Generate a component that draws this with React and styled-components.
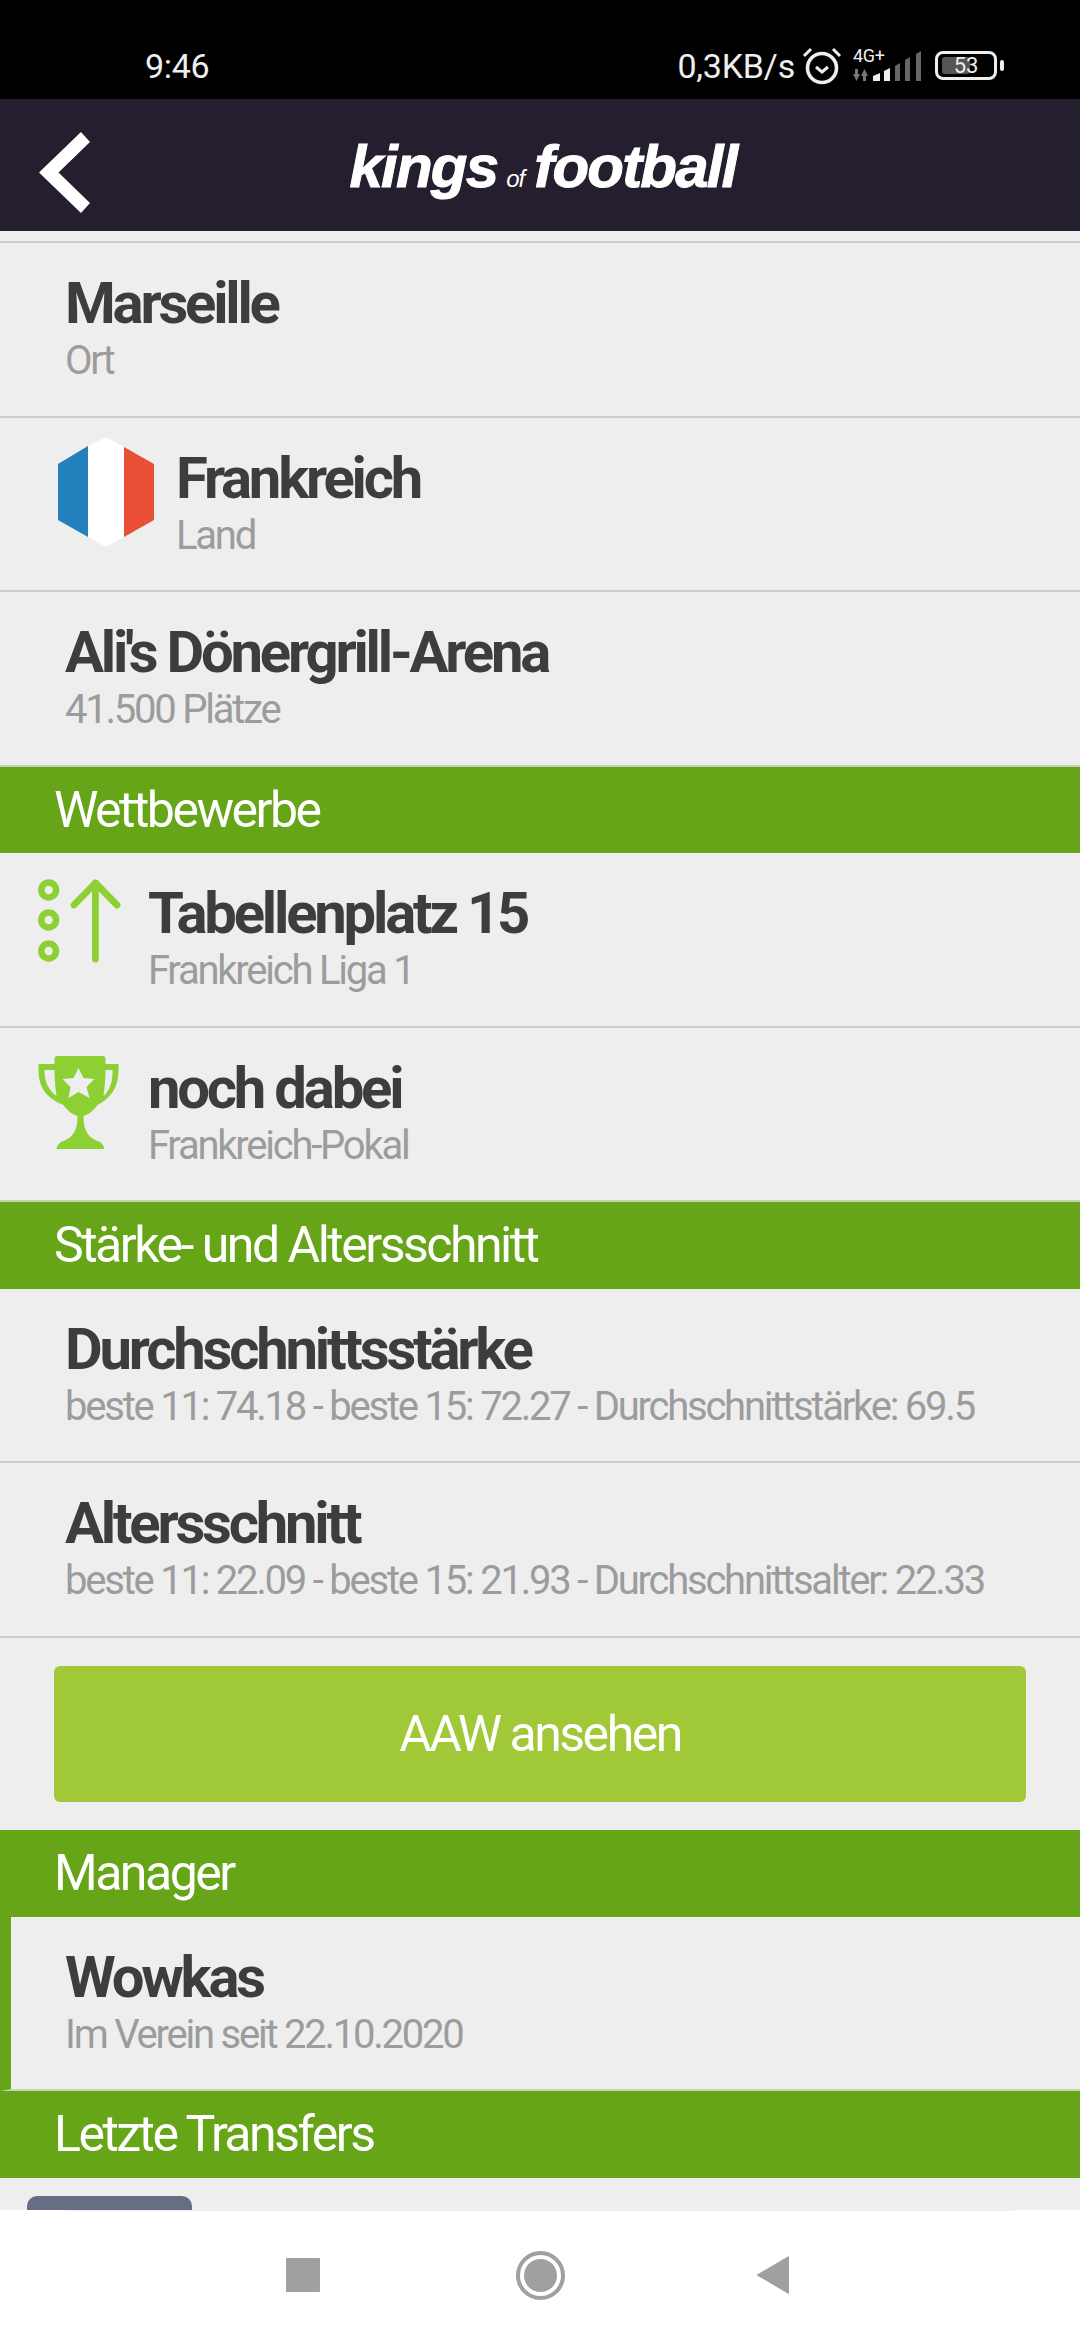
import React from 'react';
import styled, { createGlobalStyle } from 'styled-components';

const GlobalStyle = createGlobalStyle`
  html, body {
    margin: 0;
    padding: 0;
    background: #eeeeee;
  }
  * {
    box-sizing: border-box;
  }
`;

function AlarmIcon() {
  return (
    <AlarmSvg viewBox="0 0 40 38">
      <circle cx="20" cy="21" r="14.5" fill="none" stroke="#eeeeee" strokeWidth="3.6" />
      <path d="M14 20l6 5 6-5" fill="none" stroke="#eeeeee" strokeWidth="3" />
      <path d="M2 9l7-7M38 9l-7-7" fill="none" stroke="#eeeeee" strokeWidth="3" />
    </AlarmSvg>
  );
}

function SignalIcon() {
  return (
    <SignalSvg viewBox="0 0 70 30">
      <path d="M3 18h3v5h2l-3.500 7L1 23h2z" fill="#777777" />
      <path d="M11 30h3v-5h2l-3.500-7L9 25h2z" fill="#777777" />
      <path d="M21 25l7-3v8h-7z" fill="#eeeeee" />
      <path d="M32 20l6-3v13h-6z" fill="#eeeeee" />
      <path d="M43 15l5-3v18h-5z" fill="#666666" />
      <path d="M53 9l5-3v24h-5z" fill="#666666" />
      <path d="M64 3l5-3v30h-5z" fill="#666666" />
    </SignalSvg>
  );
}

function FlagIcon() {
  return (
    <FlagSvg viewBox="0 0 96 110">
      <path d="M0 27L30 9V100L0 83z" fill="#2380bd" />
      <path d="M30 9L48 0L66 10V100L48 110L30 100z" fill="#ffffff" />
      <path d="M66 10L96 27V83L66 100z" fill="#e94e37" />
    </FlagSvg>
  );
}

function RankIcon() {
  return (
    <RankSvg viewBox="0 0 84 84">
      <g fill="none" stroke="#8cd033" strokeWidth="6.500">
        <circle cx="10.700" cy="11" r="7.400" />
        <circle cx="10.700" cy="41" r="7.400" />
        <circle cx="10.700" cy="72" r="7.400" />
      </g>
      <path d="M57.400 80V4M36 26L57.400 4L79 26" fill="none" stroke="#8cd033" strokeWidth="6.800" strokeLinecap="round" strokeLinejoin="round" />
    </RankSvg>
  );
}

function TrophyIcon() {
  return (
    <TrophySvg viewBox="0 0 80 93">
      <path
        d="M16 3a3 3 0 013-3h45a3 3 0 013 3v5h13v7c0 17-9 28-21 34-5 7-10 10-14 11 0 14 4 21 14 25 4 1 6 4 7 8H18c1-4 3-7 7-8 10-4 14-11 14-25-4-1-9-4-14-11C9 43 0 32 0 15V8h16zM6 14v2c0 10 5 19 12 24-1-7-2-17-2-26zM74 14H67c0 9-1 19-2 26 6-5 9-14 9-24z"
        fill="#8cd033"
        fillRule="evenodd"
      />
      <path d="M40 12l5 10 11 1-8 8 3 11-11-6-10 6 2-11-8-8 11-1z" fill="#eeeeee" />
    </TrophySvg>
  );
}

function App() {
  return (
    <Screen>
      <GlobalStyle />
      <StatusBar>
        <Clock>9:46</Clock>
        <StatusRight>
          <Speed>0,3KB/s</Speed>
          <AlarmIcon />
          <NetworkBox>
            <NetworkLabel>4G+</NetworkLabel>
            <SignalIcon />
          </NetworkBox>
          <Battery>
            <BatteryFill />
            <BatteryText>53</BatteryText>
          </Battery>
          <BatteryNub />
        </StatusRight>
      </StatusBar>

      <Header>
        <BackIcon viewBox="0 0 52 81">
          <path d="M43 0L52 10L20.500 40.500L52 71L43 81L1 40.500z" fill="#ffffff" />
        </BackIcon>
        <Logo>
          <LogoWord>kings</LogoWord>
          <LogoOf>of</LogoOf>
          <LogoWord>football</LogoWord>
        </Logo>
      </Header>

      <TopSpacer />

      <Row>
        <RowText>
          <Title>Marseille</Title>
          <Sub>Ort</Sub>
        </RowText>
      </Row>
      <Row $indent="58px">
        <FlagIcon />
        <RowText>
          <Title>Frankreich</Title>
          <Sub>Land</Sub>
        </RowText>
      </Row>
      <Row $beforeSection>
        <RowText>
          <Title>Ali's Dönergrill-Arena</Title>
          <Sub>41.500 Plätze</Sub>
        </RowText>
      </Row>

      <SectionHeader>Wettbewerbe</SectionHeader>
      <Row $indent="38px">
        <RankIcon />
        <RowText>
          <Title>Tabellenplatz 15</Title>
          <Sub>Frankreich Liga 1</Sub>
        </RowText>
      </Row>
      <Row $indent="38px" $beforeSection>
        <TrophyIcon />
        <RowText>
          <Title>noch dabei</Title>
          <Sub>Frankreich-Pokal</Sub>
        </RowText>
      </Row>

      <SectionHeader>Stärke- und Altersschnitt</SectionHeader>
      <Row>
        <RowText>
          <Title>Durchschnittsstärke</Title>
          <Sub>beste 11: 74.18 - beste 15: 72.27 - Durchschnittstärke: 69.5</Sub>
        </RowText>
      </Row>
      <Row>
        <RowText>
          <Title>Altersschnitt</Title>
          <Sub>beste 11: 22.09 - beste 15: 21.93 - Durchschnittsalter: 22.33</Sub>
        </RowText>
      </Row>

      <ButtonArea>
        <ActionButton>AAW ansehen</ActionButton>
      </ButtonArea>

      <SectionHeader>Manager</SectionHeader>
      <Row $accent $beforeSection>
        <RowText>
          <Title>Wowkas</Title>
          <Sub>Im Verein seit 22.10.2020</Sub>
        </RowText>
      </Row>

      <SectionHeader>Letzte Transfers</SectionHeader>
      <TransferArea>
        <TransferTile />
      </TransferArea>

      <NavBar>
        <NavSquare />
        <NavCircle>
          <NavDot />
        </NavCircle>
        <NavBack viewBox="0 0 32 38">
          <path d="M32 2v34a1 1 0 01-2 1L1 20a1 1 0 010-2L30 1a1 1 0 012 1z" fill="#a0a0a0" />
        </NavBack>
      </NavBar>
    </Screen>
  );
}

const Screen = styled.div`
  width: 1080px;
  height: 2340px;
  overflow: hidden;
  background: #eeeeee;
  font-family: Roboto, "Liberation Sans", sans-serif;
`;

const StatusBar = styled.div`
  height: 99px;
  background: #000000;
  color: #eeeeee;
  display: flex;
  align-items: center;
  justify-content: space-between;
  padding: 32px 76px 0 145px;
  font-size: 34px;
`;

const Clock = styled.div`
  letter-spacing: -0.3px;
`;

const StatusRight = styled.div`
  display: flex;
  align-items: center;
`;

const Speed = styled.div`
  letter-spacing: -0.2px;
  margin-right: 7px;
`;

const AlarmSvg = styled.svg`
  width: 40px;
  height: 38px;
  margin-right: 10px;
`;

const NetworkBox = styled.div`
  position: relative;
  width: 70px;
  height: 30px;
  margin-right: 13px;
`;

const NetworkLabel = styled.div`
  position: absolute;
  left: 1px;
  top: -5px;
  font-size: 18px;
  line-height: 20px;
  letter-spacing: -0.3px;
`;

const SignalSvg = styled.svg`
  display: block;
  width: 70px;
  height: 30px;
`;

const Battery = styled.div`
  position: relative;
  width: 62px;
  height: 29px;
  border: 3.5px solid #eeeeee;
  border-radius: 8px;
  display: flex;
  align-items: center;
  justify-content: center;
`;

const BatteryFill = styled.div`
  position: absolute;
  left: 4px;
  top: 3px;
  bottom: 3px;
  width: 28px;
  border-radius: 3px;
  background: #555555;
`;

const BatteryText = styled.div`
  position: relative;
  font-size: 22px;
  line-height: 22px;
`;

const BatteryNub = styled.div`
  width: 4px;
  height: 11px;
  margin-left: 3px;
  border-radius: 2px;
  background: #eeeeee;
`;

const Header = styled.div`
  position: relative;
  height: 132px;
  background: #251e2e;
  display: flex;
  align-items: center;
  justify-content: center;
`;

const BackIcon = styled.svg`
  position: absolute;
  left: 38px;
  top: 33px;
  width: 52px;
  height: 81px;
`;

const Logo = styled.div`
  display: flex;
  align-items: baseline;
  margin-left: 6px;
  margin-top: 2px;
  color: #ffffff;
  font-family: "Liberation Sans", Arial, sans-serif;
  font-style: italic;
  font-weight: 700;
`;

const LogoWord = styled.span`
  font-size: 60px;
  letter-spacing: -1.800px;
  -webkit-text-stroke: 1px #ffffff;
`;

const LogoOf = styled.span`
  font-size: 24px;
  font-weight: 400;
  letter-spacing: -1px;
  margin: 0 10px 0 9px;
`;

const TopSpacer = styled.div`
  height: 12px;
  border-bottom: 2px solid #cccccc;
`;

const Row = styled.div`
  height: 174.5px;
  display: flex;
  align-items: center;
  gap: 16px;
  padding-left: ${(props) => props.$indent || '65px'};
  padding-bottom: 1px;
  border-bottom: 2px solid ${(props) => (props.$beforeSection ? '#c3d3b3' : '#cccccc')};
  ${(props) => props.$accent && 'border-left: 11px solid #65a517; padding-left: 54px;'}
`;

const RowText = styled.div`
  display: flex;
  flex-direction: column;
`;

const Title = styled.div`
  font-size: 58px;
  line-height: 62px;
  font-weight: 700;
  letter-spacing: -3.2px;
  color: #3c3d3f;
  white-space: nowrap;
`;

const Sub = styled.div`
  margin-top: 3px;
  font-size: 40px;
  line-height: 48px;
  font-weight: 400;
  letter-spacing: -2.230px;
  color: #9c9c9c;
  white-space: nowrap;
`;

const FlagSvg = styled.svg`
  width: 96px;
  height: 110px;
  flex-shrink: 0;
  margin: 0 6px 23px 0;
`;

const RankSvg = styled.svg`
  width: 84px;
  height: 84px;
  flex-shrink: 0;
  margin: 0 10px 35px 0;
`;

const TrophySvg = styled.svg`
  width: 81px;
  height: 93px;
  flex-shrink: 0;
  margin: 0 13px 21px 0;
`;

const SectionHeader = styled.div`
  height: 86.5px;
  padding: 0 0 0 54px;
  display: flex;
  align-items: center;
  background: #65a517;
  color: #ffffff;
  font-size: 50px;
  font-weight: 400;
  letter-spacing: -2.500px;
`;

const ButtonArea = styled.div`
  padding: 28px 54px 28.5px;
`;

const ActionButton = styled.div`
  height: 136px;
  border-radius: 6px;
  background: #a0c837;
  color: #ffffff;
  display: flex;
  align-items: center;
  justify-content: center;
  font-size: 50px;
  font-weight: 400;
  letter-spacing: -2.500px;
`;

const TransferArea = styled.div`
  height: 32.5px;
  padding: 18px 0 0 27px;
  overflow: hidden;
`;

const TransferTile = styled.div`
  width: 165px;
  height: 60px;
  border-radius: 10px;
  background: #666e82;
`;

const NavBar = styled.div`
  position: relative;
  height: 130px;
  background: #ffffff;
  display: flex;
  align-items: center;
  padding-left: 286px;
  &::before {
    content: '';
    position: absolute;
    top: 0;
    left: 66px;
    right: 66px;
    height: 1px;
    background: #eeeeee;
  }
`;

const NavSquare = styled.div`
  width: 34px;
  height: 34px;
  border-radius: 1px;
  background: #a0a0a0;
`;

const NavCircle = styled.div`
  width: 49px;
  height: 49px;
  margin-left: 196px;
  border: 4px solid #a0a0a0;
  border-radius: 50%;
  display: flex;
  align-items: center;
  justify-content: center;
`;

const NavDot = styled.div`
  width: 33px;
  height: 33px;
  border-radius: 50%;
  background: #a0a0a0;
`;

const NavBack = styled.svg`
  width: 32px;
  height: 38px;
  margin-left: 192px;
`;

export default App;
